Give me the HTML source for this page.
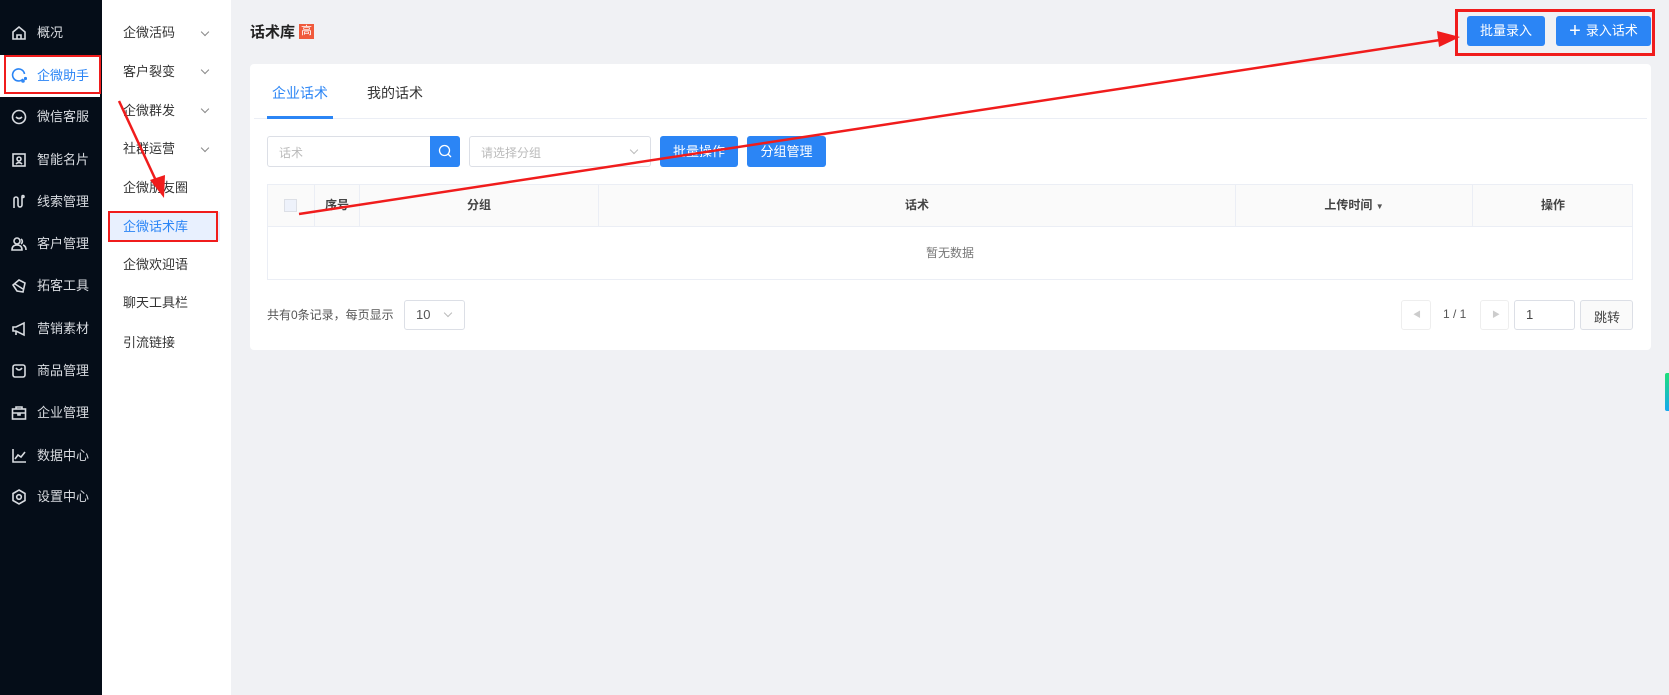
<!DOCTYPE html>
<html><head><meta charset="utf-8"><style>
*{margin:0;padding:0;box-sizing:border-box}
body{width:1669px;height:695px;overflow:hidden;background:#f0f1f4;font-family:"Liberation Sans","Noto Sans CJK SC",sans-serif;font-size:13px;color:#333;position:relative}
.abs{position:absolute}
#side{left:0;top:0;width:102px;height:695px;background:#050d18}
.si{position:absolute;left:0;width:102px;height:40px;color:#d8dbe0;font-size:13px;line-height:40px;padding-left:37px}
.si svg{position:absolute;left:11px;top:12px;width:16px;height:16px;fill:none;stroke:#d8dbe0;stroke-width:1.6}
#sub{left:102px;top:0;width:129px;height:695px;background:#fff}
.mi{position:absolute;left:22px;font-size:13px;color:#333;line-height:20px}
.chev{position:absolute;left:202px;width:6px;height:6px;border-right:1px solid #888;border-bottom:1px solid #888;transform:rotate(45deg)}
.btn{position:absolute;background:#2b85f5;color:#fff;border-radius:3px;text-align:center;font-size:13px}
.card{left:250px;top:64px;width:1401px;height:286px;background:#fff;border-radius:4px}
.bd{border:1px solid #dcdfe6;border-radius:3px;background:#fff}
.th{position:absolute;top:184px;height:43px;line-height:43px;text-align:center;font-weight:bold;font-size:12px;color:#444;border-right:1px solid #ebeef5}
</style></head><body>
<div id="side" class="abs">
 <div class="si" style="top:13px"><svg viewBox="0 0 16 16"><path d="M2 7L8 2l6 5v7H2z M6 14V10h4v4"/></svg>概况</div>
 <div class="abs" style="left:0;top:55px;width:100px;height:42px;background:#fff"></div>
 <div class="abs" style="left:4px;top:55px;width:97px;height:39px;border:2px solid #f01c1c"></div>
 <div class="si" style="top:56px;color:#2b85f5"><svg viewBox="0 0 16 16" style="stroke:#2b85f5"><path d="M12 11A6 6 0 1 1 13.5 6"/><circle cx="12" cy="13" r="1"/><circle cx="14.5" cy="10.5" r=".8"/></svg>企微助手</div>
 <div class="si" style="top:97px"><svg viewBox="0 0 16 16"><circle cx="8" cy="8" r="6.5"/><path d="M5 8q3 3 6 0"/></svg>微信客服</div>
 <div class="si" style="top:140px"><svg viewBox="0 0 16 16"><rect x="2" y="2" width="12" height="12"/><circle cx="8" cy="7" r="2"/><path d="M5 12q3-3 6 0"/></svg>智能名片</div>
 <div class="si" style="top:182px"><svg viewBox="0 0 16 16"><path d="M3 14V5a2 2 0 0 1 4 0v6a2 2 0 0 0 4 0V3"/><circle cx="12" cy="2.5" r="1"/></svg>线索管理</div>
 <div class="si" style="top:224px"><svg viewBox="0 0 16 16"><circle cx="6" cy="5" r="3"/><path d="M1 14q0-5 5-5 5 0 5 5z M10 3a3 3 0 0 1 0 5 M12 9q3 1 3 5"/></svg>客户管理</div>
 <div class="si" style="top:266px"><svg viewBox="0 0 16 16"><path d="M8 2l6 3-2 9-6 -1-4-6z M4 6l8 5"/></svg>拓客工具</div>
 <div class="si" style="top:309px"><svg viewBox="0 0 16 16"><path d="M2 6h3l8-4v12l-8-4H2z M5 10v4"/></svg>营销素材</div>
 <div class="si" style="top:351px"><svg viewBox="0 0 16 16"><rect x="2" y="2" width="12" height="12" rx="2"/><path d="M5 5q3 4 6 0"/></svg>商品管理</div>
 <div class="si" style="top:393px"><svg viewBox="0 0 16 16"><rect x="1.5" y="4" width="13" height="10"/><path d="M5 4V2h6v2 M1.5 8h13 M7 8v2h2V8"/></svg>企业管理</div>
 <div class="si" style="top:436px"><svg viewBox="0 0 16 16"><path d="M2 1v13h13 M4 11l3-4 3 2 4-5"/></svg>数据中心</div>
 <div class="si" style="top:477px"><svg viewBox="0 0 16 16"><path d="M8 1l6 3.5v7L8 15l-6-3.5v-7z"/><circle cx="8" cy="8" r="2.3"/></svg>设置中心</div>
</div>
<div id="sub" class="abs">
 <div class="abs" style="left:6px;top:212px;width:112px;height:29px;background:#e8f0fe"></div>
 <div class="abs" style="left:6px;top:211px;width:110px;height:31px;border:2px solid #f01c1c"></div>
</div>
<div class="mi abs" style="left:123px;top:23px">企微活码</div><div class="chev" style="top:29px"></div>
<div class="mi abs" style="left:123px;top:62px">客户裂变</div><div class="chev" style="top:67px"></div>
<div class="mi abs" style="left:123px;top:101px">企微群发</div><div class="chev" style="top:106px"></div>
<div class="mi abs" style="left:123px;top:139px">社群运营</div><div class="chev" style="top:145px"></div>
<div class="mi abs" style="left:123px;top:178px">企微朋友圈</div>
<div class="mi abs" style="left:123px;top:217px;color:#2b85f5">企微话术库</div>
<div class="mi abs" style="left:123px;top:255px">企微欢迎语</div>
<div class="mi abs" style="left:123px;top:293px">聊天工具栏</div>
<div class="mi abs" style="left:123px;top:333px">引流链接</div>

<div class="abs" style="left:250px;top:21px;font-size:15px;font-weight:bold;color:#222">话术库</div>
<div class="abs" style="left:299px;top:24px;width:15px;height:15px;background:#f05a3c;color:#fff;font-size:11px;line-height:15px;text-align:center">高</div>
<div class="btn" style="left:1467px;top:16px;width:78px;height:30px;line-height:30px">批量录入</div>
<div class="btn" style="left:1556px;top:16px;width:95px;height:30px;line-height:30px"><span style="font-size:20px;vertical-align:-2px;margin-right:5px">+</span>录入话术</div>
<div class="abs" style="left:1455px;top:9px;width:200px;height:47px;border:3px solid #f01c1c"></div>

<div class="card abs"></div>
<div class="abs" style="left:272px;top:83px;font-size:14px;color:#2b85f5">企业话术</div>
<div class="abs" style="left:367px;top:83px;font-size:14px;color:#333">我的话术</div>
<div class="abs" style="left:254px;top:118px;width:1393px;height:1px;background:#ebeef5"></div>
<div class="abs" style="left:267px;top:116px;width:66px;height:3px;background:#2b85f5"></div>

<div class="abs bd" style="left:267px;top:136px;width:193px;height:31px"></div>
<div class="abs" style="left:279px;top:144px;color:#bbb;font-size:12px">话术</div>
<div class="abs" style="left:430px;top:136px;width:30px;height:31px;background:#2b85f5;border-radius:0 3px 3px 0"><svg width="30" height="31" viewBox="0 0 30 31"><circle cx="14.5" cy="14.5" r="5" fill="none" stroke="#fff" stroke-width="1.3"/><path d="M18 18l3 3" stroke="#fff" stroke-width="1.3"/></svg></div>
<div class="abs bd" style="left:469px;top:136px;width:182px;height:31px"></div>
<div class="abs" style="left:481px;top:144px;color:#bbb;font-size:12px">请选择分组</div>
<div class="chev" style="left:631px;top:147px;border-color:#bbb"></div>
<div class="btn" style="left:660px;top:136px;width:78px;height:31px;line-height:31px">批量操作</div>
<div class="btn" style="left:747px;top:136px;width:79px;height:31px;line-height:31px">分组管理</div>

<div class="abs" style="left:267px;top:184px;width:1366px;height:96px;border:1px solid #ebeef5"></div>
<div class="abs" style="left:268px;top:185px;width:1364px;height:42px;background:#fafafa;border-bottom:1px solid #ebeef5"></div>
<div class="th" style="left:267px;width:48px"><span style="display:inline-block;width:13px;height:13px;border:1px solid #dcdfe6;background:#eef2fb;vertical-align:middle"></span></div>
<div class="th" style="left:315px;width:45px">序号</div>
<div class="th" style="left:360px;width:239px">分组</div>
<div class="th" style="left:599px;width:637px">话术</div>
<div class="th" style="left:1236px;width:237px">上传时间 <span style="font-size:8px;color:#555">▼</span></div>
<div class="th" style="left:1473px;width:160px;border-right:0">操作</div>
<div class="abs" style="left:267px;top:244px;width:1366px;text-align:center;font-size:12px;color:#777">暂无数据</div>

<div class="abs" style="left:267px;top:306px;font-size:12px;color:#555">共有0条记录，每页显示</div>
<div class="abs bd" style="left:404px;top:300px;width:61px;height:30px"></div>
<div class="abs" style="left:416px;top:307px;font-size:13px;color:#555">10</div>
<div class="chev" style="left:445px;top:310px;border-color:#bbb"></div>
<div class="abs bd" style="left:1401px;top:300px;width:30px;height:30px;border-color:#eee"></div>
<div class="abs" style="left:1413px;top:309px;font-size:8px;color:#ccc">◀</div>
<div class="abs" style="left:1443px;top:307px;font-size:12px;color:#555">1 / 1</div>
<div class="abs bd" style="left:1480px;top:300px;width:29px;height:30px;border-color:#eee"></div>
<div class="abs" style="left:1492px;top:309px;font-size:8px;color:#ccc">▶</div>
<div class="abs bd" style="left:1514px;top:300px;width:61px;height:30px"></div>
<div class="abs" style="left:1526px;top:307px;font-size:13px;color:#444">1</div>
<div class="abs bd" style="left:1580px;top:300px;width:53px;height:30px;background:#fafafa"></div>
<div class="abs" style="left:1594px;top:307px;font-size:13px;color:#444">跳转</div>

<div class="abs" style="left:1665px;top:373px;width:4px;height:38px;background:linear-gradient(#1fe07a,#15a8f0);border-radius:2px 0 0 2px"></div>

<svg class="abs" style="left:0;top:0" width="1669" height="695">
 <line x1="119" y1="101" x2="158" y2="185" stroke="#f01c1c" stroke-width="2.5"/>
 <polygon points="164,198 150,180 165,175" fill="#f01c1c"/>
 <line x1="299" y1="214" x2="1440" y2="40" stroke="#f01c1c" stroke-width="2.5"/>
 <polygon points="1460,37 1437,31 1439,47" fill="#f01c1c"/>
</svg>
</body></html>
